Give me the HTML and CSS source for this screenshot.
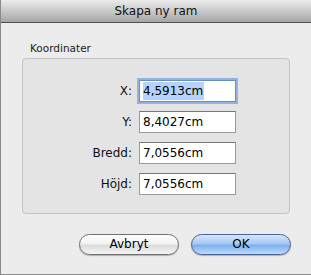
FILE: index.html
```html
<!DOCTYPE html>
<html>
<head>
<meta charset="utf-8">
<link rel="stylesheet" href="styles.css">
</head>
<body>
<div class="window">
  <div class="titlebar">Skapa ny ram</div>
  <div class="content">
    <div class="group-label">Koordinater</div>
    <div class="group">
      <div class="label">X:</div>
      <div class="field focused"><span class="sel">4,5913cm</span></div>
      <div class="label">Y:</div>
      <div class="field">8,4027cm</div>
      <div class="label">Bredd:</div>
      <div class="field">7,0556cm</div>
      <div class="label">Höjd:</div>
      <div class="field">7,0556cm</div>
    </div>
    <div class="buttons">
      <div class="btn">Avbryt</div>
      <div class="btn default">OK</div>
    </div>
  </div>
</div>
</body>
</html>
```
FILE: styles.css
```css
html, body {
  margin: 0;
  padding: 0;
  background: #ececec;
}
body {
  font-family: "DejaVu Sans", "Liberation Sans", sans-serif;
  color: #111;
}
.window {
  width: 311px;
  height: 275px;
  box-sizing: border-box;
  border-left: 1px solid #8a8a8a;
  border-bottom: 1px solid #8a8a8a;
  background: #ececec;
  overflow: hidden;
}
.titlebar {
  height: 22px;
  border-bottom: 1px solid #505050;
  background: linear-gradient(#ebebeb, #c9c9c9 50%, #a6a6a6);
  text-align: center;
  font-size: 12px;
  line-height: 23px;
  color: #111;
}
.content {
  padding: 19px 21px 0 21px;
}
.group-label {
  font-size: 10.5px;
  line-height: 13px;
  padding-left: 8px;
  color: #222;
}
.group {
  margin-top: 3px;
  height: 156px;
  box-sizing: border-box;
  border: 1px solid #c4c4c4;
  border-radius: 4px;
  background: #e4e4e4;
  padding: 21px 53px 0 0;
  display: grid;
  grid-template-columns: 1fr 97px;
  grid-auto-rows: 22px;
  column-gap: 7px;
  row-gap: 9px;
  align-content: start;
}
.label {
  text-align: right;
  font-size: 12px;
  line-height: 22px;
  color: #111;
}
.field {
  box-sizing: border-box;
  height: 22px;
  border: 1px solid #9a9a9a;
  border-top-color: #777;
  background: #fff;
  font-size: 12px;
  line-height: 20px;
  padding-left: 3px;
  color: #000;
}
.field.focused {
  border-color: #6a8fc4;
  box-shadow: 0 0 0 2px #93b4e2;
}
.sel {
  background: #b4d4fd;
  display: inline-block;
  line-height: 18px;
  padding-right: 1px;
}
.buttons {
  margin-top: 20px;
  display: flex;
  justify-content: flex-end;
  gap: 12px;
  padding-right: 0;
  margin-right: -1px;
}
.btn {
  box-sizing: border-box;
  width: 100px;
  height: 21px;
  border-radius: 11px;
  border: 1px solid #707070;
  background: linear-gradient(#ffffff, #f2f2f2 45%, #dcdcdc 55%, #f4f4f4);
  font-size: 12px;
  line-height: 19px;
  text-align: center;
  color: #000;
  box-shadow: 0 1px 1px rgba(0,0,0,0.25);
}
.btn.default {
  border-color: #4d5f93;
  background: linear-gradient(#d5e6fb, #a6c9f5 45%, #7fb0ee 55%, #b9dcfd);
}
```
